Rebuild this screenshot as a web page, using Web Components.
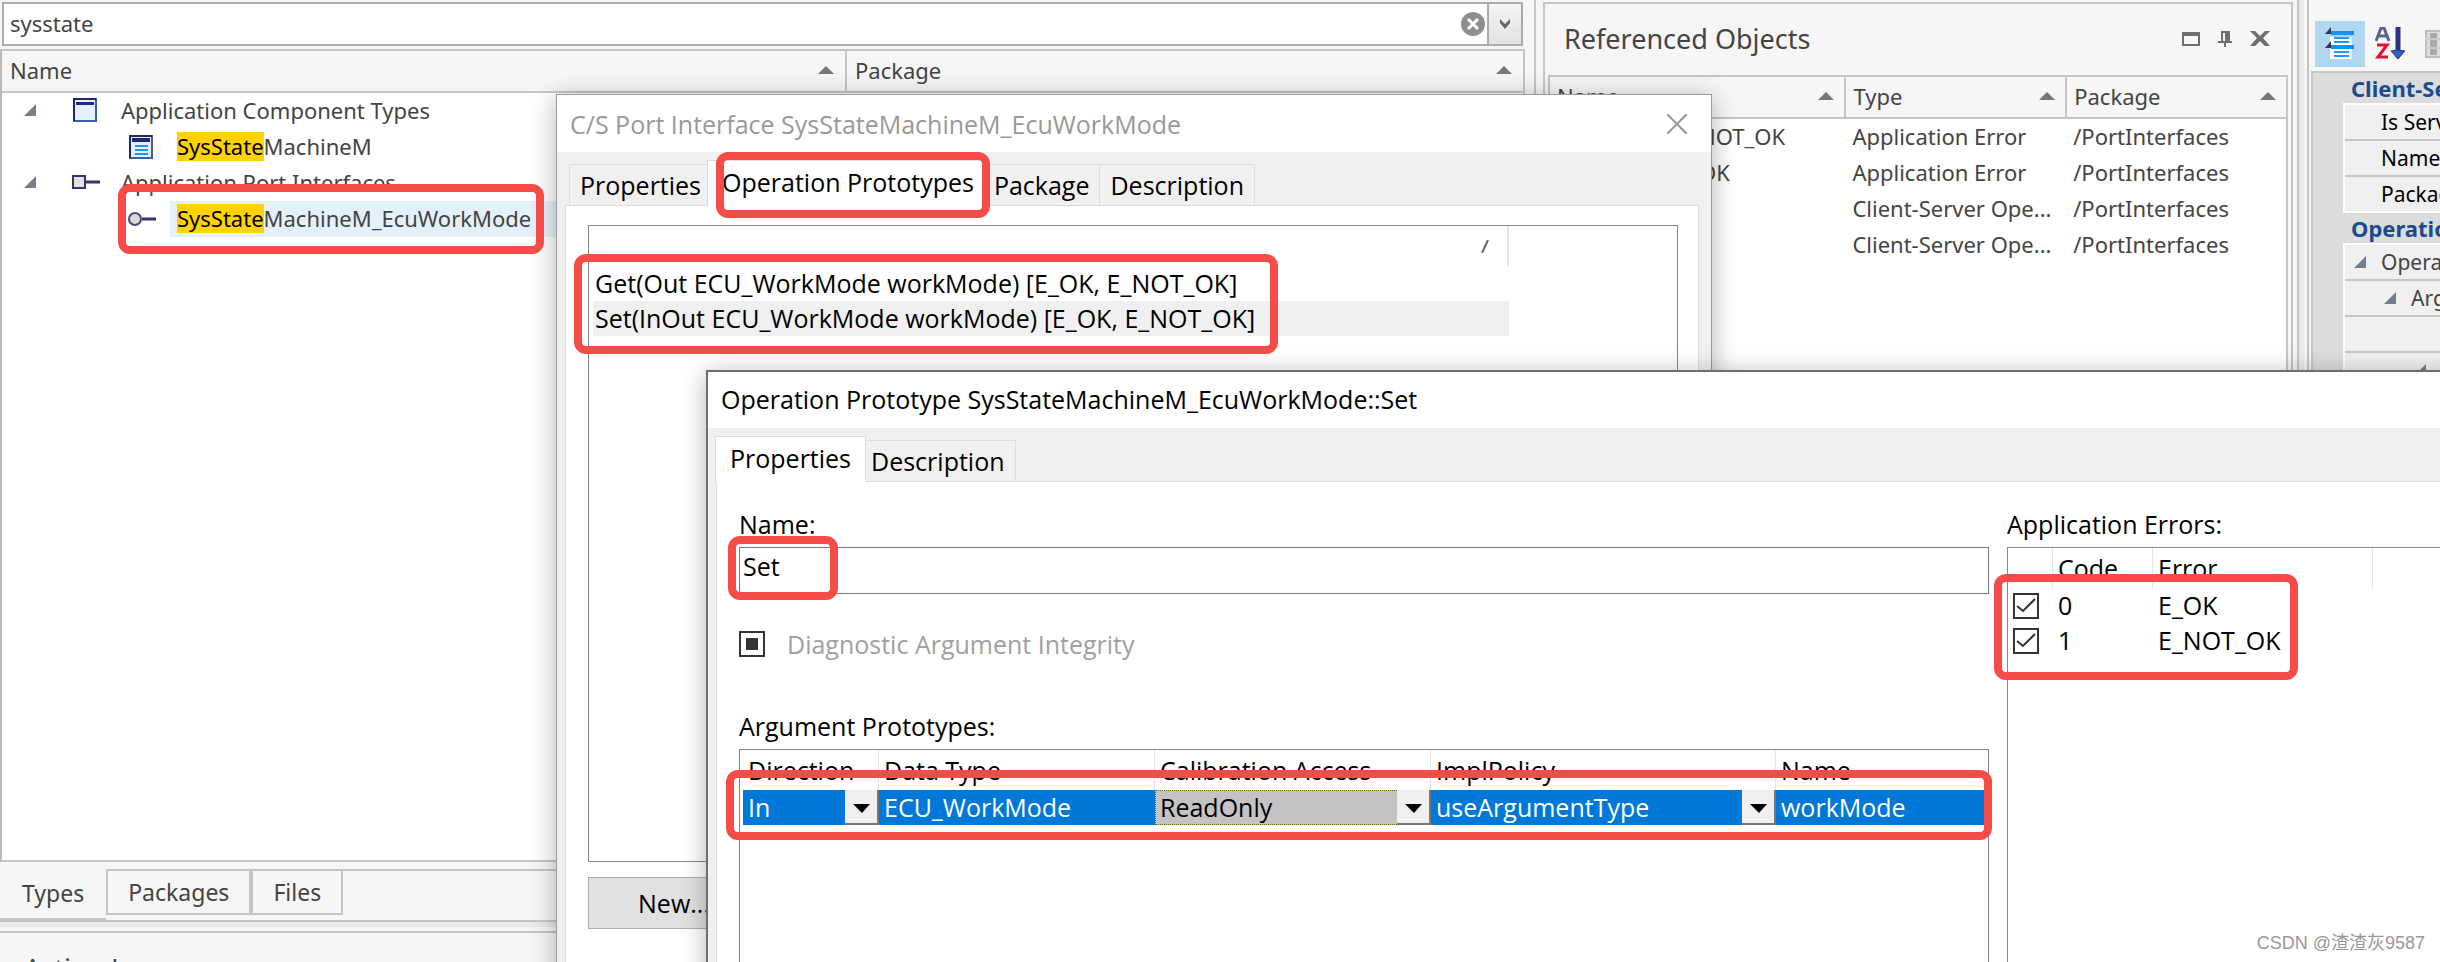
<!DOCTYPE html>
<html lang="en">
<head>
<meta charset="utf-8">
<title>Port interface editor</title>
<style>
  html, body { margin: 0; height: 100%; overflow: hidden; }
  body {
    --line: #c5c5c5;
    --pane: #f6f6f6;
    --tahoma: "Noto Sans", "DejaVu Sans", sans-serif;
    --segoe: "Open Sans", "Noto Sans", sans-serif;
    background: var(--pane);
    color: #444;
    font: 22px/34px var(--tahoma);
  }
</style>
</head>
<body>
<app-desktop></app-desktop>

<script>
// Base class: every element gives its markup and its styles
class BaseElement extends HTMLElement {
  constructor() {
    super();
    this.attachShadow({ mode: "open" });
  }
  getTemplate() {
    const template = document.createElement("template");
    template.innerHTML = `
      <style>
        *, *::before, *::after { box-sizing: border-box; }
        button, input, select { font: inherit; color: inherit; margin: 0; }
        table { border-collapse: separate; border-spacing: 0; table-layout: fixed; width: 100%; }
        th, td { padding: 0; text-align: left; font-weight: normal; white-space: nowrap; overflow: hidden; }
        ${this.getStyles()}
      </style>
      ${this.getMarkup()}
    `;
    return template;
  }
  getStyles() { return ""; }
  getMarkup() { return "<slot></slot>"; }
  connectedCallback() {
    if (this.shadowRoot.childNodes.length) return;
    this.shadowRoot.appendChild(this.getTemplate().content.cloneNode(true));
  }
}

const expander = `<svg class="expander" width="12" height="12" viewBox="0 0 12 12" aria-hidden="true"><path d="M12 0V12H0Z" fill="#767f8c"/></svg>`;
const sortArrow = `<svg class="sort" width="16" height="8" viewBox="0 0 16 8" aria-hidden="true"><path d="M8 0L16 8H0Z" fill="#767676"/></svg>`;

class SearchBox extends BaseElement {
  getStyles() {
    return `
      :host { display: flex; height: 44px; border: 2px solid #ababab; background: #fff; }
      input { flex: 1; min-width: 0; border: 0; outline: 0; background: none; padding: 0 6px 2px; }
      button { border: 0; background: none; padding: 0; display: grid; place-items: center; }
      .clear { width: 28px; }
      .more { width: 34px; border-left: 2px solid #ababab; background: linear-gradient(#f4f4f4, #e2e2e2); }
    `;
  }
  getMarkup() {
    return `
      <input type="text" aria-label="Search" value="sysstate">
      <button class="clear" aria-label="Clear">
        <svg width="24" height="24" viewBox="0 0 24 24"><circle cx="12" cy="12" r="12" fill="#8f8f8f"/><path d="M7 7L17 17M17 7L7 17" stroke="#fff" stroke-width="3"/></svg>
      </button>
      <button class="more" aria-label="Filter">
        <svg width="12" height="10" viewBox="0 0 12 10"><path d="M1 0L6 5L11 0V4L6 10L1 4Z" fill="#666"/></svg>
      </button>
    `;
  }
}
customElements.define("search-box", SearchBox);

// Icons of the tree: component types, component, port group, port
const treeIcons = {
  types: `<rect x="2" y="2" width="22" height="22" fill="#e3f1ff" stroke="#3c5fa0" stroke-width="2"/><path d="M2 24V2H24" fill="none" stroke="#27275f" stroke-width="2"/><rect x="4" y="5" width="18" height="3" fill="#1b2a80"/>`,
  component: `<rect x="2" y="2" width="22" height="22" fill="#e3f1ff" stroke="#3c5fa0" stroke-width="2"/><path d="M2 24V2H24" fill="none" stroke="#27275f" stroke-width="2"/><rect x="4" y="4" width="18" height="4" fill="#1b2a80"/><path d="M7 12H20M7 16H20M7 20H20" stroke="#2196e3" stroke-width="2"/>`,
  ports: `<rect x="1" y="7" width="12" height="12" fill="#e2e2e2" stroke="#37336b" stroke-width="2"/><path d="M14 13H28" stroke="#37336b" stroke-width="3"/>`,
  port: `<circle cx="7" cy="13" r="6" fill="#d8d8d8" stroke="#4b4874" stroke-width="2"/><path d="M14 13H28" stroke="#37336b" stroke-width="3"/>`
};

class TypeTree extends BaseElement {
  getStyles() {
    return `
      :host { display: block; border: 2px solid var(--line); border-left-color: #bbb; background: #fff; overflow: hidden; }
      th { background: var(--pane); height: 42px; line-height: 38px; border-bottom: 2px solid var(--line); padding: 0 11px 2px 8px; }
      th + th { border-left: 2px solid var(--line); }
      .head { display: flex; align-items: center; justify-content: space-between; }
      .node { display: flex; align-items: center; height: 36px; padding: 0 0 2px 22px; }
      .expander { width: 12px; margin-right: 36px; }
      .icon { width: 28px; height: 26px; margin-right: 21px; }
      .leaf { padding: 0 0 0 126px; }
      .leaf .icon { margin-right: 14px; }
      .leaf span { flex: 1; padding: 0 0 2px 7px; }
      .selected span { background: #e5f1fa; }
      mark { background: #ffd200; color: #000; line-height: 29px; display: inline-block; }
    `;
  }
  icon(name) {
    return `<svg class="icon" viewBox="0 0 28 26" aria-hidden="true">${treeIcons[name]}</svg>`;
  }
  getMarkup() {
    return `
      <table>
        <colgroup><col style="width:843px"><col></colgroup>
        <thead><tr>
          <th><div class="head">Name ${sortArrow}</div></th>
          <th><div class="head">Package ${sortArrow}</div></th>
        </tr></thead>
        <tbody>
          <tr><td><div class="node">${expander}${this.icon("types")}Application Component Types</div></td><td></td></tr>
          <tr><td><div class="node leaf">${this.icon("component")}<span><mark>SysState</mark>MachineM</span></div></td><td></td></tr>
          <tr><td><div class="node">${expander}${this.icon("ports")}Application Port Interfaces</div></td><td></td></tr>
          <tr><td><div class="node leaf selected">${this.icon("port")}<span><mark>SysState</mark>MachineM_EcuWorkMode</span></div></td><td></td></tr>
        </tbody>
      </table>
    `;
  }
}
customElements.define("type-tree", TypeTree);

class PaneTabs extends BaseElement {
  getStyles() {
    return `
      :host { display: flex; height: 60px; padding-top: 7px; font-size: 23px; }
      button { border: 2px solid var(--line); background: none; padding: 0 20px; height: 46px; line-height: 40px; }
      .active { border: 0; border-bottom: 4px solid var(--line); height: 53px; padding: 0 22px; line-height: 49px; }
      .rest { flex: 1; display: flex; border: solid var(--line); border-width: 2px 0; }
      .rest button { margin-top: -2px; }
    `;
  }
  getMarkup() {
    return `
      <button class="active">Types</button>
      <div class="rest"><button>Packages</button><button>Files</button></div>
    `;
  }
}
customElements.define("pane-tabs", PaneTabs);

class ReferencedObjects extends BaseElement {
  getStyles() {
    return `
      :host { display: flex; flex-direction: column; border: 2px solid var(--line); padding: 0 3px; margin: 2px 4px 0 7px; }
      header { display: flex; align-items: center; height: 71px; padding: 0 18px 2px 16px; }
      h2 { margin: 0; flex: 1; font: 27px/36px var(--tahoma); }
      header button { border: 0; background: none; padding: 0; height: 20px; margin-left: 18px; display: grid; place-items: center; }
      .grid { flex: 1; border: 2px solid var(--line); background: #fff; }
      th { background: var(--pane); height: 42px; line-height: 38px; border-bottom: 2px solid var(--line); padding: 0 10px 2px 7px; }
      th + th { border-left: 2px solid var(--line); }
      .head { display: flex; align-items: center; justify-content: space-between; }
      td { height: 36px; padding: 0 0 2px 8px; }
      td:first-child { padding-left: 127px; }
    `;
  }
  getMarkup() {
    const rows = [
      ["E_NOT_OK", "Application Error", "/PortInterfaces"],
      ["E_OK", "Application Error", "/PortInterfaces"],
      ["", "Client-Server Ope...", "/PortInterfaces"],
      ["", "Client-Server Ope...", "/PortInterfaces"]
    ];
    return `
      <header>
        <h2>Referenced Objects</h2>
        <button aria-label="Maximize"><svg width="18" height="14" viewBox="0 0 18 14"><path d="M1 1H17V13H1Z" fill="none" stroke="#6e6e6e" stroke-width="2"/><path d="M0 0H18V4H0Z" fill="#6e6e6e"/></svg></button>
        <button aria-label="Pin"><svg width="14" height="16" viewBox="0 0 14 16"><path d="M3 0H12V10H14V12H8V16H6V12H0V10H3ZM5 2V10H7V2Z" fill="#6e6e6e" fill-rule="evenodd"/></svg></button>
        <button aria-label="Close"><svg width="20" height="15" viewBox="0 0 20 15"><path d="M0 0H5L10 5L15 0H20L13 7L20 15H15L10 10L5 15H0L7 7Z" fill="#6e6e6e"/></svg></button>
      </header>
      <div class="grid">
        <table>
          <colgroup><col style="width:40%"><col style="width:30%"><col></colgroup>
          <thead><tr>${["Name", "Type", "Package"].map(t => `<th><div class="head">${t} ${sortArrow}</div></th>`).join("")}</tr></thead>
          <tbody>${rows.map(r => `<tr>${r.map(c => `<td>${c}</td>`).join("")}</tr>`).join("")}</tbody>
        </table>
      </div>
    `;
  }
}
customElements.define("referenced-objects", ReferencedObjects);

class PropertyGrid extends BaseElement {
  getStyles() {
    return `
      :host { display: flex; flex-direction: column; border-left: 2px solid var(--line); padding-left: 2px; overflow: hidden; font-size: 21px; color: #000; }
      .tools { display: flex; height: 71px; padding: 21px 0 4px 4px; }
      .tools button { flex: none; width: 50px; height: 46px; border: 0; background: none; padding: 0; display: grid; place-items: center; }
      .tools .on { background: #b0d6f0; }
      .grid { flex: 1; border: solid var(--line); border-width: 2px 0 0 2px; background: #dcdcdc; }
      .group { padding-left: 38px; height: 30px; line-height: 30px; font-size: 22px; font-weight: bold; color: #1b4a8f; white-space: nowrap; }
      .rows { margin-left: 30px; border: solid #fff; border-width: 2px 0 0 2px; background: #f0f0f0; }
      .row { display: flex; align-items: center; height: 36px; padding-left: 36px; border-bottom: 2px solid var(--line); white-space: nowrap; }
      .row:last-child { border-bottom-color: #fff; }
      .row.open { padding-left: 9px; color: #444; }
      .row.deep { padding-left: 39px; }
      .row.deeper { padding-left: 69px; }
      .expander { flex: none; margin-right: 15px; }
    `;
  }
  getMarkup() {
    return `
      <div class="tools">
        <button class="on" aria-label="Categorized"><svg width="30" height="34" viewBox="0 0 30 34">
          <path d="M5 10H27V32H5Z" fill="#fff"/>
          <path d="M6 6H29M6 20H29" stroke="#0d93f5" stroke-width="4"/>
          <path d="M9 11H24M9 15H24M9 25H24M9 29H24" stroke="#1c9cf5" stroke-width="2"/>
          <path d="M6 0V7H0ZM6 14V21H0Z" fill="#33305c"/></svg></button>
        <button aria-label="Sort alphabetically"><svg width="30" height="34" viewBox="0 0 30 34">
          <path d="M1 14L6 1H9L14 14M3 9H12" fill="none" stroke="#5c628c" stroke-width="3"/>
          <path d="M2 18H12L3 30H13" fill="none" stroke="#dc1434" stroke-width="3"/>
          <path d="M23 0V25" stroke="#2b3386" stroke-width="5"/><path d="M16 24Q23 22 30 24L23 32Z" fill="#2f62b8" stroke="#2b3386"/></svg></button>
        <button aria-label="Property pages"><svg width="30" height="28" viewBox="0 0 30 28">
          <path d="M1 1H29V27H1Z" fill="#ddd" stroke="#bdbdbd" stroke-width="2"/><path d="M5 3H12V25H5Z" fill="#aaa"/><path d="M0 9H30M0 18H30" stroke="#ccc" stroke-width="2"/></svg></button>
      </div>
      <div class="grid">
        <div class="group">Client-Server Interface</div>
        <div class="rows">
          <div class="row">Is Service</div>
          <div class="row">Name</div>
          <div class="row">Package</div>
        </div>
        <div class="group">Operations</div>
        <div class="rows">
          <div class="row open">${expander}Operation</div>
          <div class="row open deep">${expander}Arguments</div>
          <div class="row"></div>
          <div class="row open deeper">${expander}</div>
        </div>
      </div>
    `;
  }
}
customElements.define("property-grid", PropertyGrid);

// A window: title bar, then its content on the grey dialog face
class AppWindow extends BaseElement {
  getStyles() {
    return `
      :host { display: flex; flex-direction: column; background: #f0f0f0; border: 1px solid #9a9a9a; color: #000; font: 25px/36px var(--segoe); box-shadow: 0 4px 24px rgba(0, 0, 0, .3); }
      header { display: flex; align-items: center; justify-content: space-between; flex: none; height: 56px; background: #fff; padding: 0 24px 2px 13px; }
      :host([inactive]) header { height: 57px; padding-bottom: 0; color: #999; }
      header button { border: 0; background: none; padding: 0; display: grid; }
      .body { flex: 1; display: flex; flex-direction: column; padding: 8px 12px 0 8px; min-height: 0; }
    `;
  }
  getMarkup() {
    return `
      <header>
        <span>${this.getAttribute("caption")}</span>
        <button aria-label="Close"><svg width="20" height="20" viewBox="0 0 20 20"><path d="M0 0L20 20M20 0L0 20" stroke="#999" stroke-width="2"/></svg></button>
      </header>
      <div class="body"><slot></slot></div>
    `;
  }
}
customElements.define("app-window", AppWindow);

class DialogTabs extends BaseElement {
  getStyles() {
    return `
      :host { display: flex; flex-direction: column; flex: 1; min-height: 0; }
      nav { display: flex; align-items: flex-end; height: 45px; padding-left: 4px; }
      button { border: 1px solid #dcdcdc; border-bottom: 0; background: #f0f0f0; height: 41px; padding: 0 10px; line-height: 36px; }
      button + button { border-left: 0; }
      .active { position: relative; background: #fff; height: 46px; margin: 0 -5px -1px; padding: 0 14px 4px; border-left: 1px solid #dcdcdc; }
      .panel { flex: 1; background: #fff; border: 1px solid #dcdcdc; padding: 19px 20px 0 22px; display: flex; flex-direction: column; min-height: 0; }
    `;
  }
  getMarkup() {
    const active = this.getAttribute("active");
    return `
      <nav>${this.getAttribute("tabs").split(",").map(t => `<button${t === active ? ' class="active"' : ""}>${t}</button>`).join("")}</nav>
      <div class="panel"><slot></slot></div>
    `;
  }
}
customElements.define("dialog-tabs", DialogTabs);

class OperationList extends BaseElement {
  getStyles() {
    return `
      :host { display: block; flex: none; }
      .list { height: 637px; border: 1px solid #828790; padding-left: 4px; }
      table { width: 916px; }
      th { height: 40px; text-align: right; padding: 0 18px 0 0; border-right: 2px solid #e5e5e5; line-height: 0; }
      td { height: 35px; line-height: 35px; padding-left: 2px; }
      .selected td { background: #f0f0f0; }
      button { margin-top: 15px; width: 172px; height: 52px; border: 1px solid #adadad; background: #e1e1e1; }
    `;
  }
  getMarkup() {
    return `
      <div class="list">
        <table>
          <thead><tr><th aria-label="Operation"><svg width="8" height="13" viewBox="0 0 8 13"><path d="M7 0L1 13" stroke="#666" stroke-width="2"/></svg></th></tr></thead>
          <tbody>
            <tr><td>Get(Out ECU_WorkMode workMode) [E_OK, E_NOT_OK]</td></tr>
            <tr class="selected"><td>Set(InOut ECU_WorkMode workMode) [E_OK, E_NOT_OK]</td></tr>
          </tbody>
        </table>
      </div>
      <button>New...</button>
    `;
  }
}
customElements.define("operation-list", OperationList);

class PrototypeForm extends BaseElement {
  getStyles() {
    return `
      :host { display: grid; grid-template-columns: 1250px minmax(0, 1fr); gap: 18px; flex: 1; padding-top: 5px; }
      .main, .errors { display: flex; flex-direction: column; min-width: 0; }
      .name { height: 47px; border: 1px solid #7a7a7a; padding: 0 3px 10px; margin-top: 5px; outline: 0; }
      .check { display: flex; align-items: center; margin: 32px 0 46px; color: #a0a0a0; gap: 22px; }
      input[type=checkbox] { appearance: none; width: 26px; height: 26px; border: 2px solid #333; background: #fff no-repeat center; display: block; }
      .check input { background: linear-gradient(#333, #333) no-repeat center / 12px 12px; }
      .tick { position: relative; width: 26px; height: 26px; }
      .tick svg { position: absolute; inset: 0; pointer-events: none; }
      .list { flex: 1; border: 1px solid #828790; border-bottom: 0; margin-top: 5px; padding-left: 3px; }
      .errors .list { border-right: 0; padding-left: 0; }
      .errors table { width: 365px; }
      th { height: 40px; padding-left: 5px; border-right: 1px solid #e5e5e5; }
      td { height: 35px; line-height: 35px; padding-left: 5px; }
      .args td { background: #0078d7; color: #fff; }
      .args td.pick { padding: 0; }
      .args td.current { background: #c3c3c3; color: #000; }
      .current .combo { outline: 1px dotted #6b6b00; outline-offset: -1px; }
      .args th:last-child { border-right: 0; }
      .combo { position: relative; display: flex; height: 35px; }
      .combo select { appearance: none; flex: 1; min-width: 0; border: 0; background: none; padding: 0 34px 0 5px; outline: 0; }
      .combo svg { position: absolute; right: 0; top: 0; pointer-events: none; }
    `;
  }
  combo(label, value) {
    return `
      <div class="combo">
        <select aria-label="${label}"><option>${value}</option></select>
        <svg width="34" height="35" viewBox="0 0 34 35"><path d="M0 0H34V35H0Z" fill="#f0f0f0"/><path d="M0 34H33V0" fill="none" stroke="#777" stroke-width="2"/><path d="M8 14H25L17 23Z" fill="#000"/></svg>
      </div>
    `;
  }
  tick(label) {
    return `<div class="tick"><input type="checkbox" checked aria-label="${label}"><svg viewBox="0 0 26 26"><path d="M4 13L10 18L22 6" fill="none" stroke="#333" stroke-width="2"/></svg></div>`;
  }
  getMarkup() {
    return `
      <div class="main">
        <label for="name">Name:</label>
        <input class="name" id="name" type="text" value="Set">
        <div class="check"><input type="checkbox" id="diag"><label for="diag">Diagnostic Argument Integrity</label></div>
        <div>Argument Prototypes:</div>
        <div class="list args">
          <table>
            <colgroup><col style="width:136px"><col style="width:276px"><col style="width:276px"><col style="width:345px"><col></colgroup>
            <thead><tr><th>Direction</th><th>Data Type</th><th>Calibration Access</th><th>ImplPolicy</th><th>Name</th></tr></thead>
            <tbody><tr>
              <td class="pick">${this.combo("Direction", "In")}</td>
              <td>ECU_WorkMode</td>
              <td class="pick current">${this.combo("Calibration Access", "ReadOnly")}</td>
              <td class="pick">${this.combo("ImplPolicy", "useArgumentType")}</td>
              <td>workMode</td>
            </tr></tbody>
          </table>
        </div>
      </div>
      <div class="errors">
        <div>Application Errors:</div>
        <div class="list">
          <table>
            <colgroup><col style="width:45px"><col style="width:100px"><col></colgroup>
            <thead><tr><th></th><th>Code</th><th>Error</th></tr></thead>
            <tbody>
              <tr><td>${this.tick("E_OK")}</td><td>0</td><td>E_OK</td></tr>
              <tr><td>${this.tick("E_NOT_OK")}</td><td>1</td><td>E_NOT_OK</td></tr>
            </tbody>
          </table>
        </div>
      </div>
    `;
  }
}
customElements.define("prototype-form", PrototypeForm);

// Red frame drawn over the desktop: box="left top width height"
class RedMark extends BaseElement {
  getStyles() {
    const [x, y, w, h] = this.getAttribute("box").split(" ");
    return `:host { position: absolute; left: ${x}px; top: ${y}px; width: ${w}px; height: ${h}px; box-sizing: border-box; border: 8px solid #f64c47; border-radius: 12px; pointer-events: none; }`;
  }
}
customElements.define("red-mark", RedMark);

class AppDesktop extends BaseElement {
  getStyles() {
    return `
      :host { display: block; position: relative; height: 100vh; overflow: hidden; }
      .panes { display: grid; grid-template-columns: minmax(0, 1536fr) minmax(0, 761fr) minmax(0, 143fr); height: 100%; }
      .left { display: flex; flex-direction: column; border-right: 2px solid var(--line); }
      search-box { margin: 2px 11px 3px 2px; }
      type-tree { flex: 1; margin-right: 9px; }
      .split { height: 5px; background: #e6ebf0; }
      .log { height: 35px; padding-top: 4px; overflow: hidden; }
      .log h2 { margin: 0; border-top: 2px solid var(--line); padding: 17px 24px 0; font: 27px/38px var(--tahoma); }
      .right { display: flex; border-left: 2px solid var(--line); }
      .right::before { content: ""; flex: none; width: 8px; background: linear-gradient(90deg, #e6ebf0 5px, var(--pane) 5px); }
      property-grid { flex: 1; }
      app-window { position: absolute; }
      .interface { left: 556px; top: 94px; width: 1156px; height: 900px; box-sizing: border-box; }
      .prototype { left: 706px; top: 370px; right: -60px; bottom: -40px; border: 2px solid #6e6e6e; }
      .watermark { position: absolute; right: 15px; bottom: 2px; font: 18px/34px "Liberation Sans", "Noto Sans CJK SC", sans-serif; color: #999; }
    `;
  }
  getMarkup() {
    return `
      <div class="panes">
        <div class="left">
          <search-box></search-box>
          <type-tree></type-tree>
          <pane-tabs></pane-tabs>
          <div class="split"></div>
          <div class="log"><h2>Action Log</h2></div>
        </div>
        <referenced-objects></referenced-objects>
        <div class="right"><property-grid></property-grid></div>
      </div>
      <app-window class="interface" inactive caption="C/S Port Interface SysStateMachineM_EcuWorkMode">
        <dialog-tabs tabs="Properties,Operation Prototypes,Package,Description" active="Operation Prototypes">
          <operation-list></operation-list>
        </dialog-tabs>
      </app-window>
      <app-window class="prototype" caption="Operation Prototype SysStateMachineM_EcuWorkMode::Set">
        <dialog-tabs tabs="Properties,Description" active="Properties">
          <prototype-form></prototype-form>
        </dialog-tabs>
      </app-window>
      <red-mark box="118 184 426 70"></red-mark>
      <red-mark box="716 152 274 66"></red-mark>
      <red-mark box="574 254 704 100"></red-mark>
      <red-mark box="728 536 110 64"></red-mark>
      <red-mark box="726 770 1266 70"></red-mark>
      <red-mark box="1994 574 304 106"></red-mark>
      <div class="watermark">CSDN @渣渣灰9587</div>
    `;
  }
}
customElements.define("app-desktop", AppDesktop);
</script>
</body>
</html>
